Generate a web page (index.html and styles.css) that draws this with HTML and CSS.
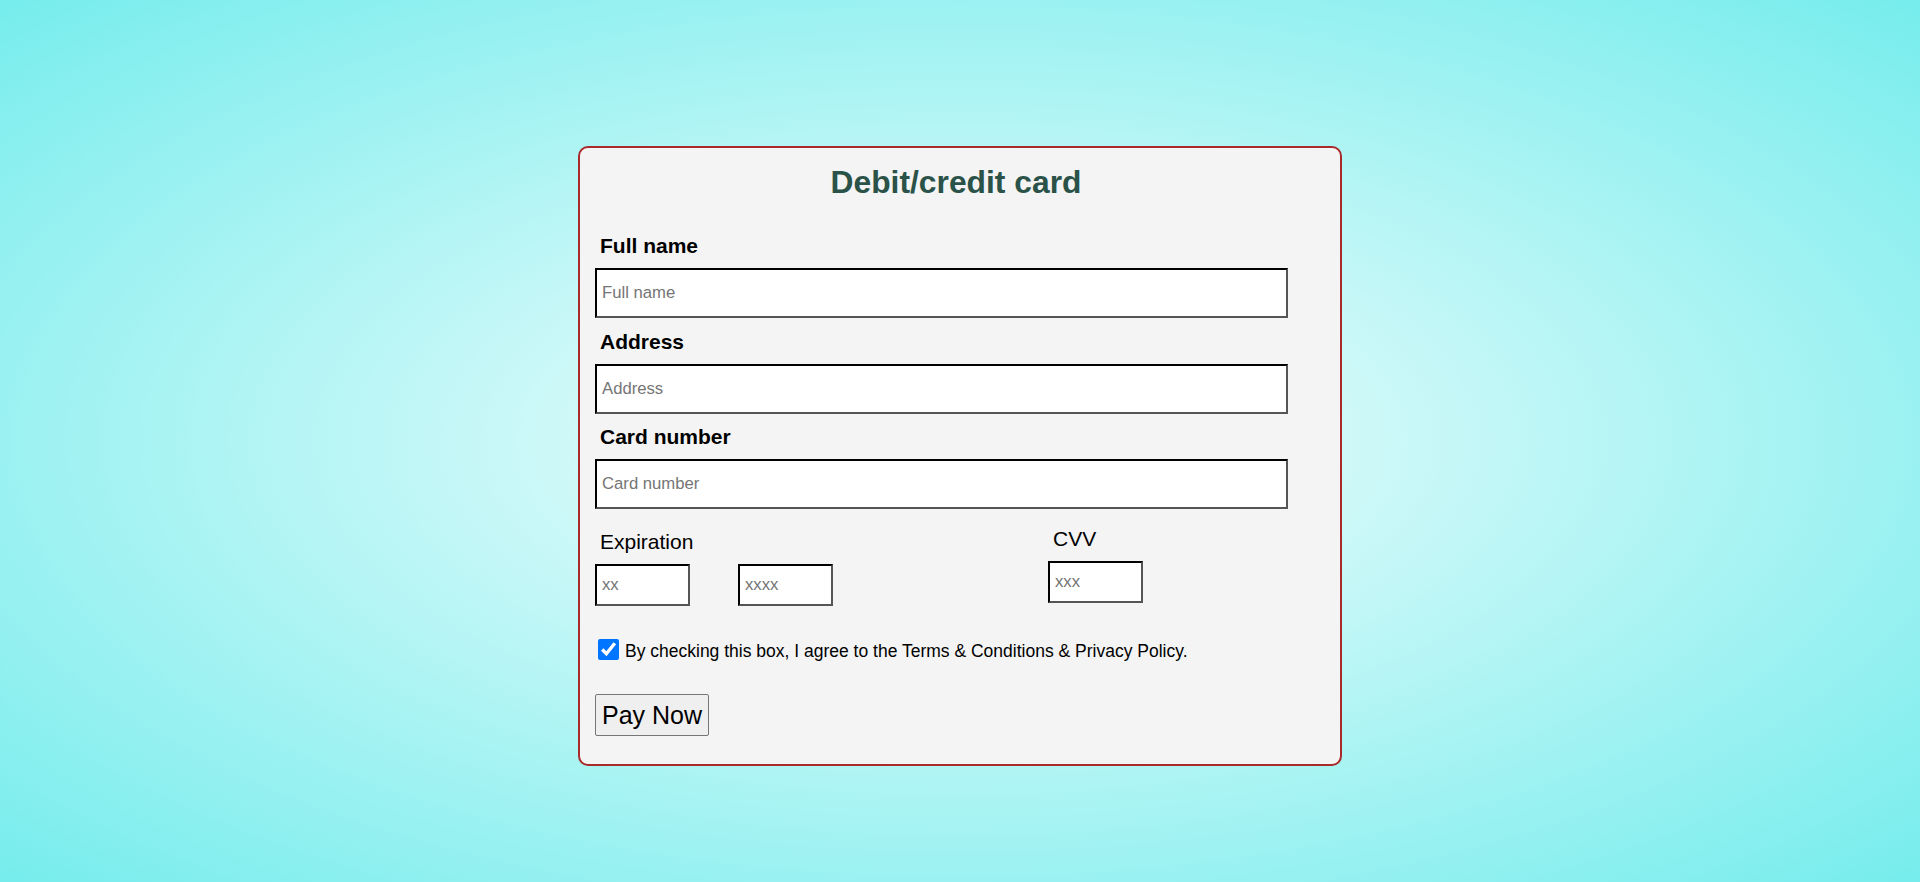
FILE: index.html
```html
<!DOCTYPE html>
<html lang="en">
<head>
<meta charset="utf-8">
<title>Debit/credit card</title>
<link rel="stylesheet" href="styles.css">
</head>
<body>
  <main class="page">
    <form class="card">
      <h1 class="card-title">Debit/credit card</h1>

      <div class="field">
        <label class="field-label strong" for="fullname">Full name</label>
        <input class="text-input wide" id="fullname" type="text" placeholder="Full name">
      </div>

      <div class="field">
        <label class="field-label strong" for="address">Address</label>
        <input class="text-input wide" id="address" type="text" placeholder="Address">
      </div>

      <div class="field">
        <label class="field-label strong" for="cardnum">Card number</label>
        <input class="text-input wide" id="cardnum" type="text" placeholder="Card number">
      </div>

      <div class="split-row">
        <div class="col-exp">
          <label class="field-label" for="expm">Expiration</label>
          <div class="exp-inputs">
            <input class="text-input small" id="expm" type="text" placeholder="xx">
            <input class="text-input small" id="expy" type="text" placeholder="xxxx">
          </div>
        </div>
        <div class="col-cvv">
          <label class="field-label" for="cvv">CVV</label>
          <input class="text-input small" id="cvv" type="text" placeholder="xxx">
        </div>
      </div>

      <div class="check-row">
        <input class="check" id="agree" type="checkbox" checked>
        <label class="check-text" for="agree">By checking this box, I agree to the Terms &amp; Conditions &amp; Privacy Policy.</label>
      </div>

      <div class="actions">
        <button class="pay-btn" type="button">Pay Now</button>
      </div>
    </form>
  </main>
</body>
</html>
```

FILE: styles.css
```css
* {
  box-sizing: border-box;
}

html, body {
  margin: 0;
  padding: 0;
}

body {
  min-height: 100vh;
  font-family: "Liberation Sans", Arial, sans-serif;
  color: #000;
  background: radial-gradient(ellipse at center, #ecfefe 0%, #dafafa 20%, #76ecec 100%);
  background-attachment: fixed;
}

.page {
  display: flex;
  justify-content: center;
  align-items: flex-start;
  padding-top: 146px;
  min-height: 882px;
}

.card {
  width: 764px;
  background: #f4f4f4;
  border: 2px solid #a82a2a;
  border-radius: 10px;
  padding: 0 23px 28px 15px;
  display: flex;
  flex-direction: column;
  align-items: flex-start;
}

.card-title {
  align-self: stretch;
  margin: 16px 0 34px;
  font-size: 31.8px;
  line-height: 36px;
  font-weight: bold;
  color: #2a5248;
  text-align: center;
}

.field {
  display: flex;
  flex-direction: column;
  align-items: flex-start;
  margin-bottom: 11.5px;
}

.field-label {
  display: block;
  font-size: 21px;
  line-height: 24px;
  padding-left: 5px;
  margin-bottom: 10px;
  font-weight: normal;
}

.field-label.strong {
  font-weight: bold;
}

.text-input {
  display: block;
  margin: 0;
  background: #fff;
  border-style: solid;
  border-width: 2px;
  border-color: #000 #555 #555 #000;
  border-radius: 0;
  padding: 0 5px;
  font-family: "Liberation Sans", Arial, sans-serif;
  font-size: 16.7px;
  color: #000;
  outline: none;
}

.text-input::placeholder {
  color: #757575;
}

.text-input.wide {
  width: 693px;
  height: 50px;
}

.text-input.small {
  width: 95px;
  height: 42px;
}

.split-row {
  display: flex;
  align-items: flex-start;
  margin-top: 6.5px;
}

.col-exp {
  width: 453px;
  padding-top: 3px;
}

.exp-inputs {
  display: flex;
  gap: 48px;
}

.col-cvv {
  display: flex;
  flex-direction: column;
}

.check-row {
  display: flex;
  align-items: flex-start;
  margin-top: 33px;
}

.check {
  width: 21px;
  height: 21px;
  margin: 0 6px 0 3px;
  accent-color: #0075ff;
}

.check-text {
  font-size: 17.5px;
  line-height: 20px;
  padding-top: 2.4px;
}

.actions {
  margin-top: 33px;
}

.pay-btn {
  height: 42px;
  padding: 0 6px;
  margin: 0;
  font-family: "Liberation Sans", Arial, sans-serif;
  font-size: 25px;
  color: #000;
  background: #efefef;
  border: 1px solid #767676;
  border-radius: 2px;
}
```
